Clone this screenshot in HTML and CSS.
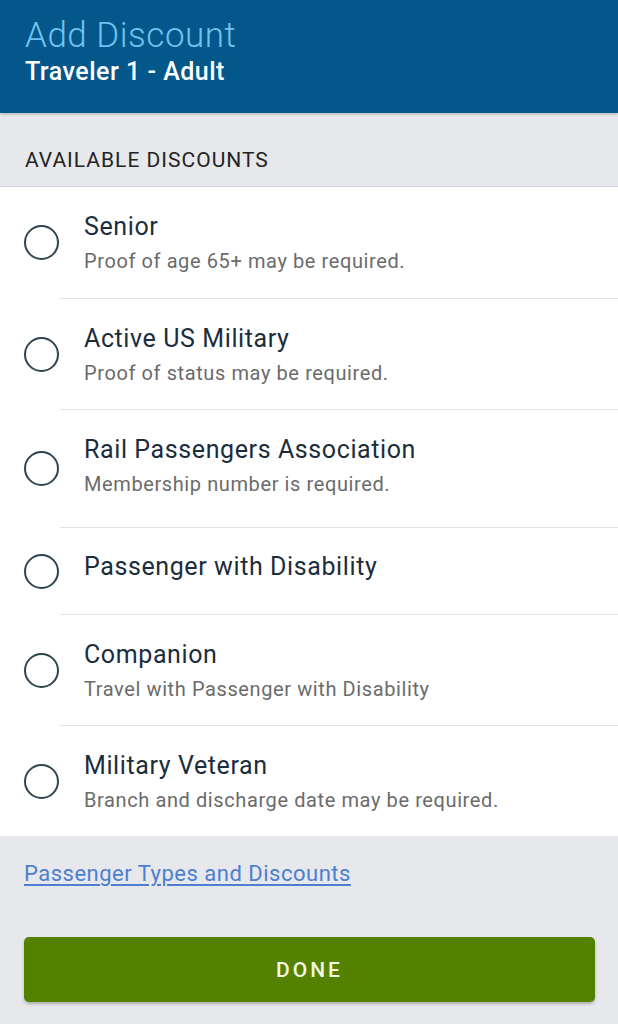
FILE: index.html
```html
<!DOCTYPE html>
<html lang="en">
<head>
<meta charset="utf-8">
<title>Add Discount</title>
<link rel="stylesheet" href="styles.css">
</head>
<body>
<header class="header">
  <h1 class="header-title">Add Discount</h1>
  <div class="header-sub">Traveler 1 - Adult</div>
</header>
<main class="content">
  <div class="section-label">AVAILABLE DISCOUNTS</div>
  <ul class="list">
    <li class="item">
      <span class="radio"></span>
      <div class="text"><div class="title">Senior</div><div class="desc">Proof of age 65+ may be required.</div></div>
    </li>
    <li class="item">
      <span class="radio"></span>
      <div class="text"><div class="title">Active US Military</div><div class="desc">Proof of status may be required.</div></div>
    </li>
    <li class="item item-tall">
      <span class="radio"></span>
      <div class="text"><div class="title">Rail Passengers Association</div><div class="desc">Membership number is required.</div></div>
    </li>
    <li class="item item-single">
      <span class="radio"></span>
      <div class="text"><div class="title">Passenger with Disability</div></div>
    </li>
    <li class="item">
      <span class="radio"></span>
      <div class="text"><div class="title">Companion</div><div class="desc">Travel with Passenger with Disability</div></div>
    </li>
    <li class="item">
      <span class="radio"></span>
      <div class="text"><div class="title">Military Veteran</div><div class="desc">Branch and discharge date may be required.</div></div>
    </li>
  </ul>
  <div class="footer">
    <a class="link" href="#">Passenger Types and Discounts</a>
    <button class="done" type="button">DONE</button>
  </div>
</main>
</body>
</html>
```

FILE: styles.css
```css
* { box-sizing: border-box; }
html, body { margin: 0; padding: 0; }
body {
  width: 618px;
  height: 1024px;
  overflow: hidden;
  background: #e6e8eb;
  font-family: Roboto, "Noto Sans", sans-serif;
}
.header {
  height: 113px;
  background: #04578a;
  padding: 15px 25px 0;
  box-shadow: 0 1px 3px rgba(0,0,0,0.25);
  position: relative;
  z-index: 1;
}
.header-title {
  margin: 0;
  font-weight: 300;
  font-size: 35px;
  letter-spacing: 0.5px;
  line-height: 42px;
  color: #6ec3ef;
}
.header-sub {
  font-weight: 500;
  font-size: 25px;
  letter-spacing: 0.5px;
  line-height: 30px;
  color: #ffffff;
}
.section-label {
  height: 74px;
  padding: 34px 25px 0;
  font-size: 21px;
  letter-spacing: 1px;
  line-height: 26px;
  color: #232323;
  border-bottom: 1px solid #cfd2d6;
}
.list {
  list-style: none;
  margin: 0;
  padding: 0;
  background: #ffffff;
}
.item {
  display: flex;
  align-items: center;
  position: relative;
  min-height: 111px;
}
.item + .item::before {
  content: "";
  position: absolute;
  top: 0;
  left: 60px;
  right: 0;
  height: 1px;
  background: #e3e3e3;
}
.item + .item { padding-top: 1px; }
.item-tall { min-height: 118px; }
.item-tall .text { padding-bottom: 31px; }
.item-single { min-height: 86px; }
.item-single .text { padding: 24px 0 32px; }
.radio {
  flex: none;
  width: 35px;
  height: 35px;
  margin-left: 24px;
  margin-right: 25px;
  border: 2px solid #2d4552;
  border-radius: 50%;
}
.text {
  padding: 24px 0 24px;
}
.title {
  font-size: 25px;
  letter-spacing: 0.6px;
  line-height: 30px;
  color: #1b2d3c;
}
.desc {
  margin-top: 7px;
  font-size: 20px;
  letter-spacing: 0.6px;
  line-height: 24px;
  color: #6b6b6b;
}
.footer {
  padding: 24px 23px 0 24px;
}
.link {
  display: block;
  font-size: 22px;
  letter-spacing: 0.5px;
  line-height: 28px;
  color: #4c7fd2;
  text-decoration: underline;
  text-underline-offset: 3px;
}
.done {
  display: block;
  width: 571px;
  height: 65px;
  margin-top: 49px;
  border: none;
  border-radius: 5px;
  background: #548200;
  box-shadow: 0 2px 3px rgba(0,0,0,0.25);
  color: #f2f7e6;
  font-family: Roboto, "Noto Sans", sans-serif;
  font-weight: 500;
  font-size: 21px;
  letter-spacing: 3px;
}
```
